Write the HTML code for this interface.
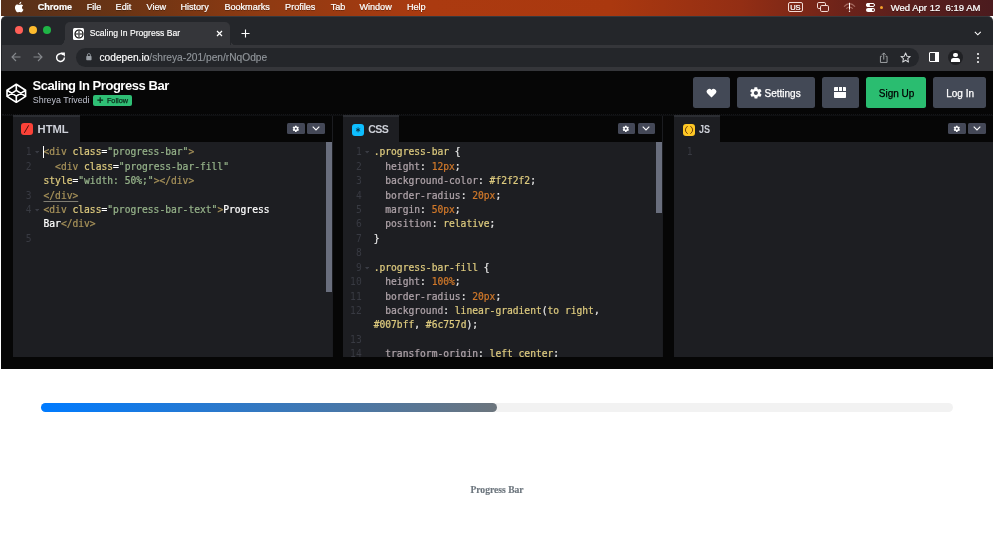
<!DOCTYPE html>
<html><head><meta charset="utf-8"><title>Scaling In Progress Bar</title>
<style>
html,body{margin:0;padding:0;background:#fff;}
body{width:995px;height:544px;overflow:hidden;position:relative;font-family:"Liberation Sans",sans-serif;}
.abs,#root *{position:absolute;box-sizing:border-box;}
#root{position:absolute;left:0;top:0;width:995px;height:544px;overflow:hidden;will-change:transform;}
.t{white-space:nowrap;line-height:1;}
/* menu bar */
#menubar{left:1px;top:0;width:992px;height:15.5px;background:linear-gradient(90deg,#57301a 0px,#6a3414 120px,#8e3a12 260px,#ab3a10 430px,#aa380f 610px,#932e14 740px,#6a221a 850px,#581f1d 910px,#4b1b1e 992px);}
#menubar .t{color:#fff;font-size:9.1px;top:3px;-webkit-text-stroke:0.22px #fff;text-shadow:0 0.5px 0.6px rgba(0,0,0,.35);}
/* window */
#winbg{left:1px;top:15.5px;width:991.6px;height:353px;background:#24262a;border-radius:5px 5px 0 0;overflow:hidden;border-top:1px solid #37393d;}
#win{left:1.5px;top:15.5px;width:991.1px;height:528.5px;}
#tab{left:63.4px;top:6.5px;width:165.6px;height:23px;background:#35363a;border-radius:5px 5px 0 0;}
#toolbar{left:0;top:29.5px;width:991.1px;height:25.5px;background:#35363a;}
#omni{left:74px;top:3.2px;width:843px;height:18.8px;border-radius:10px;background:#24262a;}
/* codepen */
#cp{left:0;top:55px;width:991.1px;height:298px;background:#060606;overflow:hidden;}
#cpbg{left:1px;top:70.5px;width:991.6px;height:298px;background:#060606;}
#preview{left:-1.5px;top:353px;width:995px;height:176px;background:#fff;}
.btn{background:#434956;border-radius:2.5px;top:6.7px;height:30.8px;color:#fff;}
.ed{top:71px;width:319.2px;height:215.4px;background:#1d1e22;overflow:hidden;}
.edtab{top:44.4px;height:27.6px;background:#1d1e22;border-top:2px solid #2b2d32;}
.edtab .t{color:#cdd0d8;font-weight:bold;font-size:11.2px;top:7.5px;}
.sbtn{top:52.5px;width:17.5px;height:11px;background:#444857;border-radius:1.5px;}
.code{-webkit-text-stroke:0.22px currentColor;font-family:"DejaVu Sans Mono","Liberation Mono",monospace;font-size:9.63px;line-height:14.43px;white-space:pre;color:#fff;left:30.5px;top:3.7px;}
.ln{font-family:"DejaVu Sans Mono","Liberation Mono",monospace;font-size:9.63px;line-height:14.43px;white-space:pre;color:#383a42;left:0;width:18.500px;text-align:right;top:3.7px;}
#root .code *,#root .ln *{position:static}
#root .l{display:block;height:14.45px;line-height:14.45px;}
.bt{-webkit-text-stroke:0.25px currentColor;}
.tg{color:#a7925a}.at{color:#ddca7e}.st{color:#96b38a}.pr{color:#b0a4aa}.nu{color:#d0782a}.w{color:#e6e6e6}
</style></head><body>
<div id="root">
<div id="menubar">
  <svg style="left:12.800px;top:1.200px" width="10.400" height="12.200" viewBox="0 0 20 24"><path fill="#fff" d="M15.5 12.7c0-2.6 2.1-3.8 2.2-3.9-1.2-1.800-3.100-2-3.700-2-1.600-.2-3.100.9-3.900.9-.8 0-2-.9-3.400-.9-1.700 0-3.300 1-4.200 2.600-1.800 3.100-.5 7.700 1.300 10.300.9 1.200 1.900 2.600 3.200 2.600 1.300-.1 1.800-.8 3.400-.8 1.500 0 2 .8 3.400.8 1.400 0 2.300-1.300 3.200-2.500 1-1.400 1.400-2.800 1.400-2.900-.1 0-2.900-1.100-2.900-4.200zM13 4.900c.7-.9 1.200-2.100 1.100-3.300-1 0-2.300.7-3 1.600-.7.800-1.300 2-1.100 3.200 1.100.1 2.300-.6 3-1.500z"/></svg>
  <div class="t" style="left:36.7px;font-weight:bold;">Chrome</div>
  <div class="t" style="left:85.7px;">File</div>
  <div class="t" style="left:114.6px;">Edit</div>
  <div class="t" style="left:145.5px;">View</div>
  <div class="t" style="left:179.4px;">History</div>
  <div class="t" style="left:223.4px;">Bookmarks</div>
  <div class="t" style="left:284.1px;">Profiles</div>
  <div class="t" style="left:329.7px;">Tab</div>
  <div class="t" style="left:358.4px;">Window</div>
  <div class="t" style="left:405.9px;">Help</div>
  <div style="left:786.800px;top:2.200px;width:15.100px;height:10.300px;border:0.800px solid #f3dcd6;border-radius:2px;"></div>
  <div class="t" style="left:789.300px;top:4.100px;font-size:7.500px;letter-spacing:-0.100px;">US</div>
  <div style="left:816.200px;top:2.400px;width:9.300px;height:7.100px;border:0.900px solid #f3dcd6;border-radius:1.800px;"></div>
  <div style="left:818.800px;top:4.800px;width:9.500px;height:7.100px;border:0.900px solid #f3dcd6;border-radius:1.800px;background:#74241a"></div>
  <svg style="left:842px;top:2px" width="13" height="11" viewBox="0 0 13 11"><path d="M1 4.600 Q6.500 -1.400 12 4.600" stroke="#d9a79a" stroke-width="1.100" fill="none" opacity=".55"/><path d="M3.200 6.700 Q6.500 3.200 9.800 6.700" stroke="#d9a79a" stroke-width="1.100" fill="none" opacity=".55"/><path d="M6.500 0.800 L6.500 7.600" stroke="#fff" stroke-width="1"/><circle cx="6.500" cy="9.300" r=".75" fill="#fff"/></svg>
  <div style="left:864.600px;top:2.900px;width:9.800px;height:4.100px;border-radius:2.100px;border:0.800px solid #fff;"></div>
  <div style="left:864.600px;top:2.900px;width:4.300px;height:4.100px;border-radius:2.100px;background:#fff;"></div>
  <div style="left:864.600px;top:8px;width:9.800px;height:4.100px;border-radius:2.100px;background:#fff;"></div>
  <div style="left:871.300px;top:9px;width:2.100px;height:2.100px;border-radius:50%;background:#5a1e1a;"></div>
  <div style="left:879.200px;top:5.700px;width:3.300px;height:3.300px;border-radius:2px;background:#f7a12a;"></div>
  <div class="t" style="left:889.7px;font-size:9.52px;">Wed Apr 12&nbsp; 6:19 AM</div>
</div>
<div id="winbg"></div><div id="cpbg"></div>
<div id="win">
  <!-- traffic lights -->
  <div style="left:13.7px;top:10.7px;width:8.2px;height:8.2px;border-radius:50%;background:#ff5f57"></div>
  <div style="left:27.7px;top:10.7px;width:8.2px;height:8.2px;border-radius:50%;background:#febc2e"></div>
  <div style="left:41.4px;top:10.7px;width:8.2px;height:8.2px;border-radius:50%;background:#1fb546"></div>
  <div style="left:57.900px;top:24px;width:5.500px;height:5.500px;background:radial-gradient(circle at 0 0,rgba(53,54,58,0) 5.100px,#35363a 5.700px);"></div><div style="left:229px;top:24px;width:5.500px;height:5.500px;background:radial-gradient(circle at 100% 0,rgba(53,54,58,0) 5.100px,#35363a 5.700px);"></div>
  <div id="tab">
    <div style="left:7.9px;top:6.200px;width:11.500px;height:11.400px;background:#fff;border-radius:1.5px;"></div>
    <svg style="left:8.650px;top:6.900px" width="10" height="10" viewBox="0 0 20 20"><circle cx="10" cy="10" r="8" fill="none" stroke="#0c0c0c" stroke-width="2.400"/><path d="M10 3 V8.500 M10 11.500 V17 M3 10 H8.500 M11.500 10 H17" stroke="#0c0c0c" stroke-width="1.900"/><path d="M10 7.800 L12.200 10 L10 12.200 L7.800 10 Z" fill="none" stroke="#0c0c0c" stroke-width="1.100"/></svg>
    <div class="t" style="left:24.9px;top:6.800px;font-size:8.600px;color:#fff;-webkit-text-stroke:0.150px #fff;">Scaling In Progress Bar</div>
    <svg style="left:150.900px;top:8px" width="7" height="7" viewBox="0 0 7 7"><path d="M1 1 L6 6 M6 1 L1 6" stroke="#fff" stroke-width="1.200"/></svg>
  </div>
  <svg style="left:239.500px;top:13.500px" width="9" height="9" viewBox="0 0 9 9"><path d="M4.500 0.500 V8.500 M0.500 4.500 H8.500" stroke="#fff" stroke-width="1.100"/></svg>
  <svg style="left:972.700px;top:15px" width="7.600" height="5.100" viewBox="0 0 9 6"><path d="M1 1 L4.500 4.500 L8 1" stroke="#fff" stroke-width="1.300" fill="none"/></svg>
  <div id="toolbar">
    <svg style="left:9.500px;top:6.800px" width="10" height="10" viewBox="0 0 10 10"><path d="M9.500 5 H1 M5 1 L1 5 L5 9" stroke="#85888c" stroke-width="1.100" fill="none"/></svg>
    <svg style="left:31.500px;top:6.800px" width="10" height="10" viewBox="0 0 10 10"><path d="M0.500 5 H9 M5 1 L9 5 L5 9" stroke="#85888c" stroke-width="1.100" fill="none"/></svg>
    <svg style="left:53px;top:6.500px" width="11" height="11" viewBox="0 0 11 11"><path d="M9.400 5.600 A3.900 3.900 0 1 1 8.200 2.700" stroke="#fff" stroke-width="1.500" fill="none"/><path d="M5.800 0.600 H9.900 V4.700 Z" fill="#fff"/></svg>
    <div id="omni">
      <svg style="left:10.700px;top:5.300px" width="5.800" height="7.500" viewBox="0 0 7 9"><rect x="0.300" y="3.600" width="6.400" height="5" rx="0.800" fill="#9aa0a6"/><path d="M1.700 4 V2.400 A1.800 1.800 0 0 1 5.300 2.400 V4" stroke="#9aa0a6" stroke-width="1" fill="none"/></svg>
      <div class="t" style="left:24px;top:5px;font-size:10.200px;color:#fff;-webkit-text-stroke:0.150px currentColor;">codepen.io<span style="position:static;color:#90959a">/shreya-201/pen/rNqOdpe</span></div>
      <svg style="left:803.300px;top:3.600px" width="9.500" height="11.400" viewBox="0 0 10 12"><path d="M3 4.500 H1.500 V11 H8.500 V4.500 H7 M5 8 V1 M3 3 L5 1 L7 3" stroke="#a3a6aa" stroke-width="1" fill="none"/></svg>
      <svg style="left:824.600px;top:3.800px" width="11.200" height="11.200" viewBox="0 0 12 12"><path d="M6 1 L7.500 4.500 L11 4.800 L8.300 7.200 L9.100 10.800 L6 8.900 L2.900 10.800 L3.700 7.200 L1 4.800 L4.500 4.500 Z" stroke="#d5d7da" stroke-width="1.100" fill="none" stroke-linejoin="round"/></svg>
    </div>
    <div style="left:927.700px;top:7.300px;width:9.800px;height:9.300px;border:1.200px solid #fff;border-radius:1px;"></div>
    <div style="left:933px;top:7.300px;width:4.500px;height:9.300px;background:#fff;"></div>
    <div style="left:946.500px;top:4.700px;width:15px;height:15px;border-radius:50%;background:#202124;overflow:hidden;">
       <div style="left:5.300px;top:2.900px;width:4.600px;height:4.600px;border-radius:50%;background:#fff;"></div>
       <div style="left:3.400px;top:8px;width:8.400px;height:4.300px;border-radius:2.500px 2.500px 0.500px 0.500px;background:#fff;"></div>
    </div>
    <div style="left:975.400px;top:7.500px;width:2px;height:2px;border-radius:50%;background:#fff;"></div>
    <div style="left:975.400px;top:11.500px;width:2px;height:2px;border-radius:50%;background:#fff;"></div>
    <div style="left:975.400px;top:15.500px;width:2px;height:2px;border-radius:50%;background:#fff;"></div>
  </div>
  <div id="cp">
    <!-- header -->
    <svg style="left:4.900px;top:12px" width="20.600" height="20.600" viewBox="0 0 100 100"><path d="M50 6 L95 35 V65 L50 94 L5 65 V35 Z M50 6 V36 M50 94 V64 M5 35 L50 64 L95 35 M5 65 L50 36 L95 65" fill="none" stroke="#fff" stroke-width="8" stroke-linejoin="round"/></svg>
    <div class="t" style="left:31px;top:8.500px;font-size:13px;font-weight:bold;color:#fff;letter-spacing:-0.450px;">Scaling In Progress Bar</div>
    <div class="t" style="left:31.300px;top:25.500px;font-size:8.900px;color:#c0c3cf;">Shreya Trivedi</div>
    <div style="left:91.500px;top:24.800px;width:39px;height:10.500px;border-radius:2px;background:#2fbf75;"></div>
    <svg style="left:95.700px;top:26.900px" width="6.400" height="6.400" viewBox="0 0 6.400 6.400"><path d="M3.200 0.300 V6.100 M0.300 3.200 H6.100" stroke="#0c2b1a" stroke-width="1.200"/></svg><div class="t" style="left:105.400px;top:26.600px;font-size:7.300px;color:#0c2b1a;-webkit-text-stroke:0.250px #0c2b1a;">Follow</div>
    <div class="btn" style="left:691px;width:37.500px;"><svg style="left:13.500px;top:10.800px" width="11" height="10" viewBox="0 0 22 20"><path d="M11 19 L2.500 10.500 A5.300 5.300 0 0 1 11 4 A5.300 5.300 0 0 1 19.500 10.500 Z" fill="#fff"/></svg></div>
    <div class="btn" style="left:735.500px;width:77.500px;"><svg style="left:11.750px;top:8.950px" width="13.800" height="13.800" viewBox="0 0 24 24"><path fill="#fff" d="M19.400 13c0-.3.100-.6.100-1s0-.7-.1-1l2.100-1.600c.2-.2.200-.4.100-.6l-2-3.500c-.1-.2-.4-.3-.6-.2l-2.500 1c-.5-.4-1.100-.7-1.700-1l-.4-2.600c0-.3-.2-.5-.5-.5h-4c-.3 0-.5.200-.5.400l-.4 2.700c-.6.200-1.100.6-1.700 1l-2.500-1c-.2-.1-.5 0-.6.200l-2 3.500c-.1.200-.1.500.1.600L4.600 11c0 .3-.1.600-.1 1s0 .7.100 1l-2.100 1.600c-.2.200-.2.400-.1.600l2 3.500c.1.200.4.300.6.200l2.500-1c.5.400 1.100.7 1.700 1l.4 2.600c0 .2.200.4.500.4h4c.3 0 .5-.2.500-.4l.4-2.600c.6-.3 1.200-.6 1.700-1l2.500 1c.2.100.5 0 .6-.2l2-3.500c.1-.2.100-.5-.1-.6L19.400 13zM12 15.500c-1.900 0-3.500-1.600-3.500-3.500s1.600-3.500 3.500-3.500 3.500 1.600 3.500 3.500-1.600 3.500-3.500 3.500z"/></svg>
      <div class="t bt" style="left:27.500px;top:11.400px;font-size:10px;">Settings</div></div>
    <div class="btn" style="left:820px;width:37.500px;">
      <div style="left:12.800px;top:9.700px;width:11.700px;height:11.200px;background:#fff;border-radius:0.800px;"></div>
      <div style="left:16.200px;top:9.700px;width:0.900px;height:3.800px;background:#434956;"></div>
      <div style="left:20.200px;top:9.700px;width:0.900px;height:3.800px;background:#434956;"></div>
      <div style="left:12.800px;top:13.500px;width:11.700px;height:0.900px;background:#434956;"></div>
    </div>
    <div class="btn" style="left:864.300px;width:60.200px;background:#2abd70;color:#000;"><div class="t bt" style="left:13px;top:11.400px;font-size:10px;">Sign Up</div></div>
    <div class="btn" style="left:931.700px;width:53px;"><div class="t bt" style="left:13px;top:11.400px;font-size:10px;">Log In</div></div>
    <div style="left:0;top:43.600px;width:992px;height:0;border-top:1px dotted #151619;"></div><div style="left:0;top:44.600px;width:992px;height:1px;background:#0e0f11;"></div>

    <div style="left:330px;top:45px;width:1.200px;height:241.500px;background:#1b1c20;"></div><div style="left:660.700px;top:45px;width:1.200px;height:241.500px;background:#1b1c20;"></div>
    <!-- HTML editor -->
    <div class="edtab" style="left:11.500px;width:66.500px;">
      <div style="left:8.400px;top:6.300px;width:12px;height:12px;border-radius:3px;background:#fb4238;"></div>
      <svg style="left:8.400px;top:6.300px" width="12" height="12" viewBox="0 0 12 12"><path d="M3.300 9.900 L7.700 2.300" stroke="#3a0a06" stroke-width="0.900"/></svg>
      <div class="t" style="left:24.600px;">HTML</div>
    </div>
    <div class="sbtn" style="left:285.600px;"><svg style="left:4.900px;top:1.700px" width="7.600" height="7.600" viewBox="0 0 24 24"><path fill="#fff" d="M19.400 13c0-.3.100-.6.100-1s0-.7-.1-1l2.100-1.600c.2-.2.200-.4.100-.6l-2-3.500c-.1-.2-.4-.3-.6-.2l-2.500 1c-.5-.4-1.100-.7-1.700-1l-.4-2.600c0-.3-.2-.5-.5-.5h-4c-.3 0-.5.200-.5.400l-.4 2.700c-.6.200-1.100.6-1.700 1l-2.500-1c-.2-.1-.5 0-.6.200l-2 3.500c-.1.200-.1.500.1.600L4.600 11c0 .3-.1.600-.1 1s0 .7.100 1l-2.100 1.600c-.2.200-.2.400-.1.600l2 3.500c.1.200.4.300.6.200l2.500-1c.5.400 1.100.7 1.700 1l.4 2.600c0 .2.200.4.500.4h4c.3 0 .5-.2.500-.4l.4-2.600c.6-.3 1.200-.6 1.700-1l2.500 1c.2.100.5 0 .6-.2l2-3.500c.1-.2.100-.5-.1-.6L19.400 13zM12 15.200c-1.800 0-3.200-1.400-3.200-3.200s1.400-3.200 3.200-3.200 3.200 1.400 3.200 3.200-1.400 3.200-3.200 3.200z"/></svg></div><div class="sbtn" style="left:305.500px;"><svg style="left:4.700px;top:3.300px" width="8" height="5" viewBox="0 0 8 5"><path d="M0.700 0.700 L4 3.900 L7.300 0.700" stroke="#fff" stroke-width="1.150" fill="none"/></svg></div>
    <div class="ed" style="left:11.500px;">
      <div class="ln"><div class="l">1</div><div class="l">2</div><div class="l">&nbsp;</div><div class="l">3</div><div class="l">4</div><div class="l">&nbsp;</div><div class="l">5</div></div>
      <div class="code"><div class="l"><span class="tg">&lt;div</span> <span class="at">class</span>=<span class="st">"progress-bar"</span><span class="tg">&gt;</span></div><div class="l">  <span class="tg">&lt;div</span> <span class="at">class</span>=<span class="st">"progress-bar-fill"</span></div><div class="l"><span class="at">style</span>=<span class="st">"width: 50%;"</span><span class="tg">&gt;&lt;/div&gt;</span></div><div class="l"><span class="tg" style="text-decoration:underline;text-decoration-color:#807d72;text-underline-offset:2px;text-decoration-thickness:0.800px">&lt;/div&gt;</span></div><div class="l"><span class="tg">&lt;div</span> <span class="at">class</span>=<span class="st">"progress-bar-text"</span><span class="tg">&gt;</span>Progress</div><div class="l">Bar<span class="tg">&lt;/div&gt;</span></div></div>
      <div style="left:29.700px;top:4.300px;width:1px;height:12.500px;background:#fff;"></div>
      <svg style="left:21.800px;top:9.90px" width="4.200" height="2.600" viewBox="0 0 4.200 2.600"><path d="M0 0 H4.200 L2.100 2.600 Z" fill="#3a3c44"/></svg><svg style="left:21.800px;top:67.70px" width="4.200" height="2.600" viewBox="0 0 4.200 2.600"><path d="M0 0 H4.200 L2.100 2.600 Z" fill="#3a3c44"/></svg>
      <div style="left:312.500px;top:0;width:6.700px;height:150.600px;background:#696e7d;"></div>
    </div>

    <!-- CSS editor -->
    <div class="edtab" style="left:341.700px;width:55.500px;">
      <div style="left:8.800px;top:7.100px;width:12.100px;height:11.700px;border-radius:3px;background:#0ebeff;"></div>
      <svg style="left:8.800px;top:7.100px" width="12.100" height="11.700" viewBox="0 0 12.100 11.700"><path d="M6.050 3.400 V8.300 M3.950 4.650 L8.150 7.050 M8.150 4.650 L3.950 7.050" stroke="#062a3a" stroke-width="0.800"/></svg>
      <div class="t" style="left:25px;top:7.200px;font-size:10.600px;letter-spacing:-0.600px;">CSS</div>
    </div>
    <div class="sbtn" style="left:616px;"><svg style="left:4.900px;top:1.700px" width="7.600" height="7.600" viewBox="0 0 24 24"><path fill="#fff" d="M19.400 13c0-.3.100-.6.100-1s0-.7-.1-1l2.100-1.600c.2-.2.200-.4.100-.6l-2-3.500c-.1-.2-.4-.3-.6-.2l-2.500 1c-.5-.4-1.100-.7-1.700-1l-.4-2.600c0-.3-.2-.5-.5-.5h-4c-.3 0-.5.200-.5.400l-.4 2.700c-.6.200-1.100.6-1.700 1l-2.500-1c-.2-.1-.5 0-.6.200l-2 3.500c-.1.200-.1.500.1.600L4.600 11c0 .3-.1.600-.1 1s0 .7.100 1l-2.100 1.600c-.2.200-.2.400-.1.600l2 3.500c.1.200.4.300.6.200l2.500-1c.5.400 1.100.7 1.700 1l.4 2.600c0 .2.200.4.500.4h4c.3 0 .5-.2.500-.4l.4-2.600c.6-.3 1.200-.6 1.700-1l2.500 1c.2.100.5 0 .6-.2l2-3.500c.1-.2.100-.5-.1-.6L19.400 13zM12 15.200c-1.800 0-3.200-1.400-3.200-3.200s1.400-3.200 3.200-3.200 3.200 1.400 3.200 3.200-1.400 3.200-3.200 3.200z"/></svg></div><div class="sbtn" style="left:636px;"><svg style="left:4.700px;top:3.300px" width="8" height="5" viewBox="0 0 8 5"><path d="M0.700 0.700 L4 3.900 L7.300 0.700" stroke="#fff" stroke-width="1.150" fill="none"/></svg></div>
    <div class="ed" style="left:341.700px;">
      <div class="ln"><div class="l">1</div><div class="l">2</div><div class="l">3</div><div class="l">4</div><div class="l">5</div><div class="l">6</div><div class="l">7</div><div class="l">8</div><div class="l">9</div><div class="l">10</div><div class="l">11</div><div class="l">12</div><div class="l">&nbsp;</div><div class="l">13</div><div class="l">14</div></div>
      <div class="code"><div class="l"><span class="at">.progress-bar</span> <span class="w">{</span></div><div class="l">  <span class="pr">height</span><span class="w">:</span> <span class="nu">12px</span><span class="w">;</span></div><div class="l">  <span class="pr">background-color</span><span class="w">:</span> <span class="at">#f2f2f2</span><span class="w">;</span></div><div class="l">  <span class="pr">border-radius</span><span class="w">:</span> <span class="nu">20px</span><span class="w">;</span></div><div class="l">  <span class="pr">margin</span><span class="w">:</span> <span class="nu">50px</span><span class="w">;</span></div><div class="l">  <span class="pr">position</span><span class="w">:</span> <span class="at">relative</span><span class="w">;</span></div><div class="l"><span class="w">}</span></div><div class="l">&nbsp;</div><div class="l"><span class="at">.progress-bar-fill</span> <span class="w">{</span></div><div class="l">  <span class="pr">height</span><span class="w">:</span> <span class="nu">100%</span><span class="w">;</span></div><div class="l">  <span class="pr">border-radius</span><span class="w">:</span> <span class="nu">20px</span><span class="w">;</span></div><div class="l">  <span class="pr">background</span><span class="w">:</span> <span class="at">linear-gradient</span><span class="w">(</span><span class="at">to right</span><span class="w">,</span></div><div class="l"><span class="at">#007bff</span><span class="w">,</span> <span class="at">#6c757d</span><span class="w">);</span></div><div class="l">&nbsp;</div><div class="l">  <span class="pr">transform-origin</span><span class="w">:</span> <span class="at">left center</span><span class="w">;</span></div></div>
      <svg style="left:21.800px;top:9.90px" width="4.200" height="2.600" viewBox="0 0 4.200 2.600"><path d="M0 0 H4.200 L2.100 2.600 Z" fill="#3a3c44"/></svg><svg style="left:21.800px;top:125.50px" width="4.200" height="2.600" viewBox="0 0 4.200 2.600"><path d="M0 0 H4.200 L2.100 2.600 Z" fill="#3a3c44"/></svg>
      <div style="left:312.500px;top:0;width:6.700px;height:71.200px;background:#696e7d;"></div>
    </div>

    <!-- JS editor -->
    <div class="edtab" style="left:672.600px;width:45.700px;">
      <div style="left:8.900px;top:7.100px;width:12px;height:11.900px;border-radius:3px;background:#ffc825;"></div>
      <svg style="left:8.900px;top:7.100px" width="12" height="11.900" viewBox="0 0 12 12"><path d="M4.600 2.100 Q0 6 4.600 9.900 M7.400 2.100 Q12 6 7.400 9.900" stroke="#6a3a08" stroke-width="0.950" fill="none"/></svg>
      <div class="t" style="left:25.200px;top:7.200px;font-size:10.800px;transform:scaleX(0.84);transform-origin:0 0;">JS</div>
    </div>
    <div class="sbtn" style="left:946.500px;"><svg style="left:4.900px;top:1.700px" width="7.600" height="7.600" viewBox="0 0 24 24"><path fill="#fff" d="M19.400 13c0-.3.100-.6.100-1s0-.7-.1-1l2.100-1.600c.2-.2.200-.4.100-.6l-2-3.500c-.1-.2-.4-.3-.6-.2l-2.500 1c-.5-.4-1.100-.7-1.700-1l-.4-2.600c0-.3-.2-.5-.5-.5h-4c-.3 0-.5.200-.5.400l-.4 2.700c-.6.200-1.100.6-1.700 1l-2.500-1c-.2-.1-.5 0-.6.200l-2 3.500c-.1.200-.1.500.1.600L4.600 11c0 .3-.1.600-.1 1s0 .7.100 1l-2.100 1.600c-.2.200-.2.400-.1.600l2 3.500c.1.200.4.300.6.200l2.500-1c.5.400 1.100.7 1.700 1l.4 2.600c0 .2.200.4.500.4h4c.3 0 .5-.2.500-.4l.4-2.600c.6-.3 1.200-.6 1.700-1l2.500 1c.2.100.5 0 .6-.2l2-3.500c.1-.2.100-.5-.1-.6L19.400 13zM12 15.200c-1.800 0-3.200-1.400-3.200-3.200s1.400-3.200 3.200-3.200 3.200 1.400 3.200 3.200-1.400 3.200-3.200 3.200z"/></svg></div><div class="sbtn" style="left:966.500px;"><svg style="left:4.700px;top:3.300px" width="8" height="5" viewBox="0 0 8 5"><path d="M0.700 0.700 L4 3.900 L7.300 0.700" stroke="#fff" stroke-width="1.150" fill="none"/></svg></div>
    <div class="ed" style="left:672.600px;width:320px;">
      <div class="ln"><div class="l">1</div></div>
    </div>
  </div>
  <div id="preview">
    <div style="left:41.200px;top:34.600px;width:911.900px;height:9.100px;border-radius:5px;background:#f2f2f2;"></div>
    <div style="left:41.200px;top:34.600px;width:455.700px;height:9.100px;border-radius:5px;background:linear-gradient(to right,#007bff,#6c757d);"></div>
    <div class="t" style="left:1.500px;width:991px;text-align:center;top:116px;font-family:'Liberation Serif',serif;font-weight:bold;font-size:9.600px;color:#6c757d;-webkit-text-stroke:0.150px #6c757d;">Progress Bar</div>
  </div>
</div>
</div>
</body></html>
